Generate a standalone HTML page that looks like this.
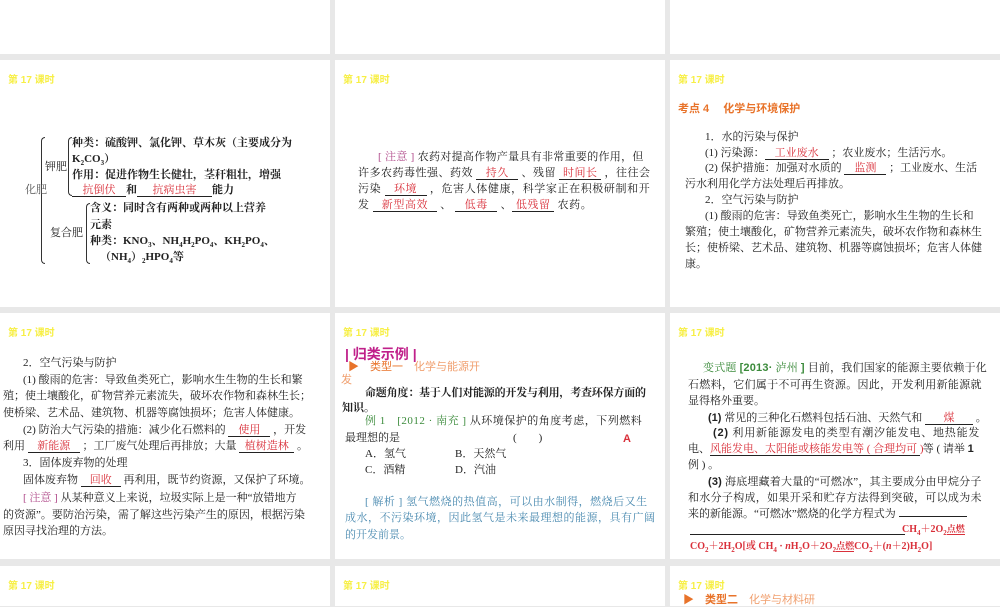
<!DOCTYPE html>
<html><head><meta charset="utf-8"><style>
body{margin:0;width:1000px;height:600px;background:#e8e8e8;position:relative;overflow:hidden;font-family:"Liberation Serif","Noto Serif CJK SC","Noto Sans CJK SC",serif;color:#222;}
.p{position:absolute;background:#fff;}
.l{position:absolute;white-space:nowrap;font-size:11px;line-height:14px;}
.h{position:absolute;font-family:"Liberation Sans","Noto Sans CJK SC",sans-serif;font-size:10px;font-weight:bold;color:#f7ef45;white-space:nowrap;}
.b{display:inline-block;border-bottom:1px solid #222;text-align:center;color:#d9303a;line-height:12px;}
.r{color:#d9303a}
.bb{font-weight:bold}
.s{font-family:"Liberation Sans","Noto Sans CJK SC",sans-serif;}
.br{position:absolute;border:1px solid #333;border-right:none;border-radius:4px 0 0 4px;width:3px;}
</style></head><body>
<div class="p" style="left:0;top:0;width:330px;height:54px"></div>
<div class="p" style="left:335px;top:0;width:330px;height:54px"></div>
<div class="p" style="left:670px;top:0;width:330px;height:54px"></div>
<div class="p" style="left:0;top:60px;width:330px;height:247px"></div>
<div class="p" style="left:335px;top:60px;width:330px;height:247px"></div>
<div class="p" style="left:670px;top:60px;width:330px;height:247px"></div>
<div class="p" style="left:0;top:313px;width:330px;height:246px"></div>
<div class="p" style="left:335px;top:313px;width:330px;height:246px"></div>
<div class="p" style="left:670px;top:313px;width:330px;height:246px"></div>
<div class="p" style="left:0;top:566px;width:330px;height:40px"></div>
<div class="p" style="left:335px;top:566px;width:330px;height:40px"></div>
<div class="p" style="left:670px;top:566px;width:330px;height:40px"></div>

<div class="h" style="left:8px;top:71px">第 17 课时</div>
<div class="h" style="left:343px;top:71px">第 17 课时</div>
<div class="h" style="left:678px;top:71px">第 17 课时</div>
<div class="h" style="left:8px;top:324px">第 17 课时</div>
<div class="h" style="left:343px;top:324px">第 17 课时</div>
<div class="h" style="left:678px;top:324px">第 17 课时</div>
<div class="h" style="left:8px;top:577px">第 17 课时</div>
<div class="h" style="left:343px;top:577px">第 17 课时</div>
<div class="h" style="left:678px;top:577px">第 17 课时</div>

<!-- col1 row2 tree -->
<div class="br" style="left:41px;top:137px;height:125px"></div>
<div class="br" style="left:68px;top:137px;height:57px"></div>
<div class="br" style="left:86px;top:203px;height:59px"></div>
<div class="l" style="left:25px;top:183px;color:#555">化肥</div>
<div class="l" style="left:45px;top:160px">钾肥</div>
<div class="l" style="left:50px;top:226px">复合肥</div>
<div class="l bb" style="left:72px;top:136px">种类：硫酸钾、氯化钾、草木灰（主要成分为</div>
<div class="l bb" style="left:72px;top:152px">K<sub style="font-size:7px">2</sub>CO<sub style="font-size:7px">3</sub>）</div>
<div class="l bb" style="left:72px;top:168px">作用：促进作物生长健壮，茎秆粗壮，增强</div>
<div class="l bb" style="left:72px;top:183px"><span class="b" style="width:54px;font-weight:normal">抗倒伏</span>和<span class="b" style="width:75px;font-weight:normal">抗病虫害</span>能力</div>
<div class="l bb" style="left:90px;top:201px">含义：同时含有两种或两种以上营养</div>
<div class="l bb" style="left:90px;top:218px">元素</div>
<div class="l bb" style="left:90px;top:234px">种类：KNO<sub style="font-size:7px">3</sub>、NH<sub style="font-size:7px">4</sub>H<sub style="font-size:7px">2</sub>PO<sub style="font-size:7px">4</sub>、KH<sub style="font-size:7px">2</sub>PO<sub style="font-size:7px">4</sub>、</div>
<div class="l bb" style="left:100px;top:250px">（NH<sub style="font-size:7px">4</sub>）<sub style="font-size:7px">2</sub>HPO<sub style="font-size:7px">4</sub>等</div>

<!-- col2 row2 -->
<div class="l" style="left:378px;top:150px;letter-spacing:0.3px"><span style="color:#b04a8a">[ 注意 ]</span> 农药对提高作物产量具有非常重要的作用，但</div>
<div class="l" style="left:358px;top:166px;letter-spacing:0.5px">许多农药毒性强、药效 <span class="b" style="width:42px">持久</span> 、残留 <span class="b" style="width:42px">时间长</span> ，往往会</div>
<div class="l" style="left:358px;top:182px;letter-spacing:0.6px">污染 <span class="b" style="width:42px">环境</span> ，危害人体健康，科学家正在积极研制和开</div>
<div class="l" style="left:358px;top:198px;letter-spacing:0.6px">发 <span class="b" style="width:64px">新型高效</span> 、 <span class="b" style="width:42px">低毒</span> 、<span class="b" style="width:42px">低残留</span> 农药。</div>

<!-- col3 row2 -->
<div class="l s bb" style="left:678px;top:102px;color:#e8732a">考点 4　 化学与环境保护</div>
<div class="l" style="left:705px;top:130px">1．水的污染与保护</div>
<div class="l" style="left:705px;top:146px">(1) 污染源：<span class="b" style="width:64px">工业废水</span> ；农业废水；生活污水。</div>
<div class="l" style="left:705px;top:161px">(2) 保护措施：加强对水质的 <span class="b" style="width:42px">监测</span> ；工业废水、生活</div>
<div class="l" style="left:685px;top:177px">污水利用化学方法处理后再排放。</div>
<div class="l" style="left:705px;top:193px">2．空气污染与防护</div>
<div class="l" style="left:705px;top:209px">(1) 酸雨的危害：导致鱼类死亡，影响水生生物的生长和</div>
<div class="l" style="left:685px;top:225px">繁殖；使土壤酸化，矿物营养元素流失，破坏农作物和森林生</div>
<div class="l" style="left:685px;top:241px">长；使桥梁、艺术品、建筑物、机器等腐蚀损坏；危害人体健</div>
<div class="l" style="left:685px;top:257px">康。</div>

<!-- col1 row3 -->
<div class="l" style="left:23px;top:356px">2．空气污染与防护</div>
<div class="l" style="left:23px;top:373px">(1) 酸雨的危害：导致鱼类死亡，影响水生生物的生长和繁</div>
<div class="l" style="left:3px;top:389px">殖；使土壤酸化，矿物营养元素流失，破坏农作物和森林生长；</div>
<div class="l" style="left:3px;top:406px">使桥梁、艺术品、建筑物、机器等腐蚀损坏；危害人体健康。</div>
<div class="l" style="left:23px;top:423px">(2) 防治大气污染的措施：减少化石燃料的 <span class="b" style="width:42px">使用</span> ，开发</div>
<div class="l" style="left:3px;top:439px">利用 <span class="b" style="width:52px">新能源</span> ；工厂废气处理后再排放；大量 <span class="b" style="width:55px">植树造林</span> 。</div>
<div class="l" style="left:23px;top:456px">3．固体废弃物的处理</div>
<div class="l" style="left:23px;top:473px">固体废弃物 <span class="b" style="width:40px">回收</span> 再利用，既节约资源，又保护了环境。</div>
<div class="l" style="left:23px;top:491px"><span style="color:#b04a8a">[ 注意 ]</span> 从某种意义上来说，垃圾实际上是一种“放错地方</div>
<div class="l" style="left:3px;top:508px">的资源”。要防治污染，需了解这些污染产生的原因，根据污染</div>
<div class="l" style="left:3px;top:524px">原因寻找治理的方法。</div>

<!-- col2 row3 -->
<div class="l s" style="left:345px;top:346px;font-size:14px;line-height:16px;color:#c0208a;font-weight:bold">| 归类示例 |</div>
<div class="l s" style="left:348px;top:360px;color:#e8732a">▶　类型一　<span style="color:#f0a070">化学与能源开</span></div>
<div class="l s" style="left:341px;top:373px;color:#f0a070">发</div>
<div class="l bb" style="left:365px;top:386px;letter-spacing:-0.2px">命题角度：基于人们对能源的开发与利用，考查环保方面的</div>
<div class="l bb" style="left:342px;top:401px">知识。</div>
<div class="l" style="left:365px;top:414px;letter-spacing:0.5px"><span style="color:#3a8a3a">例 1　[2012 · 南充 ]</span> 从环境保护的角度考虑，下列燃料</div>
<div class="l" style="left:345px;top:431px">最理想的是</div>
<div class="l" style="left:513px;top:431px">(　　)</div>
<div class="l bb s r" style="left:623px;top:432px">A</div>
<div class="l" style="left:365px;top:447px">A．氢气</div><div class="l" style="left:455px;top:447px">B．天然气</div>
<div class="l" style="left:365px;top:463px">C．酒精</div><div class="l" style="left:455px;top:463px">D．汽油</div>
<div class="l" style="left:365px;top:495px;color:#4a8ab0;letter-spacing:0.5px">[ 解析 ] 氢气燃烧的热值高，可以由水制得，燃烧后又生</div>
<div class="l" style="left:345px;top:511px;color:#4a8ab0;letter-spacing:0.5px">成水，不污染环境，因此氢气是未来最理想的能源，具有广阔</div>
<div class="l" style="left:345px;top:528px;color:#4a8ab0">的开发前景。</div>

<!-- col3 row3 -->
<div class="l" style="left:703px;top:361px;letter-spacing:0.2px"><span style="color:#3a8a3a">变式题 <span class="s bb">[2013·</span> 泸州 <span class="s bb">]</span></span> 目前，我们国家的能源主要依赖于化</div>
<div class="l" style="left:688px;top:378px;letter-spacing:0.3px">石燃料，它们属于不可再生资源。因此，开发利用新能源就</div>
<div class="l" style="left:688px;top:394px">显得格外重要。</div>
<div class="l" style="left:708px;top:411px"><span class="s bb">(1)</span> 常见的三种化石燃料包括石油、天然气和 <span class="b" style="width:48px">煤</span> 。</div>
<div class="l" style="left:713px;top:426px;letter-spacing:0.8px"><span class="s bb">(2)</span> 利用新能源发电的类型有潮汐能发电、地热能发</div>
<div class="l" style="left:688px;top:442px">电、<span class="b" style="width:210px;text-align:left">风能发电、太阳能或核能发电等 ( 合理均可 )</span> 等 ( 请举 <span class="s bb">1</span></div>
<div class="l" style="left:688px;top:458px">例 ) 。</div>
<div class="l" style="left:708px;top:475px;letter-spacing:0.2px"><span class="s bb">(3)</span> 海底埋藏着大量的“可燃冰”，其主要成分由甲烷分子</div>
<div class="l" style="left:688px;top:491px;letter-spacing:0.3px">和水分子构成，如果开采和贮存方法得到突破，可以成为未</div>
<div class="l" style="left:688px;top:507px">来的新能源。“可燃冰”燃烧的化学方程式为 <span class="b" style="width:68px"></span></div>
<div style="position:absolute;left:690px;top:534px;width:215px;border-bottom:1px solid #222"></div>
<div class="l bb r" style="left:902px;top:522px;font-size:10px">CH<sub style="font-size:7px">4</sub>＋2O<sub style="font-size:7px">2</sub><span style="border-bottom:1px solid #d9303a;font-size:9px">点燃</span></div>
<div class="l bb r" style="left:690px;top:539px;font-size:10px">CO<sub style="font-size:7px">2</sub>＋2H<sub style="font-size:7px">2</sub>O[或 CH<sub style="font-size:7px">4</sub> · <i>n</i>H<sub style="font-size:7px">2</sub>O＋2O<sub style="font-size:7px">2</sub><span style="border-bottom:1px solid #d9303a;font-size:9px">点燃</span>CO<sub style="font-size:7px">2</sub>＋(<i>n</i>＋2)H<sub style="font-size:7px">2</sub>O]</div>

<!-- col3 row4 -->
<div class="l s" style="left:683px;top:593px;color:#e8732a">▶　<span class="bb">类型二</span>　<span style="color:#f0a070">化学与材料研</span></div>
</body></html>
